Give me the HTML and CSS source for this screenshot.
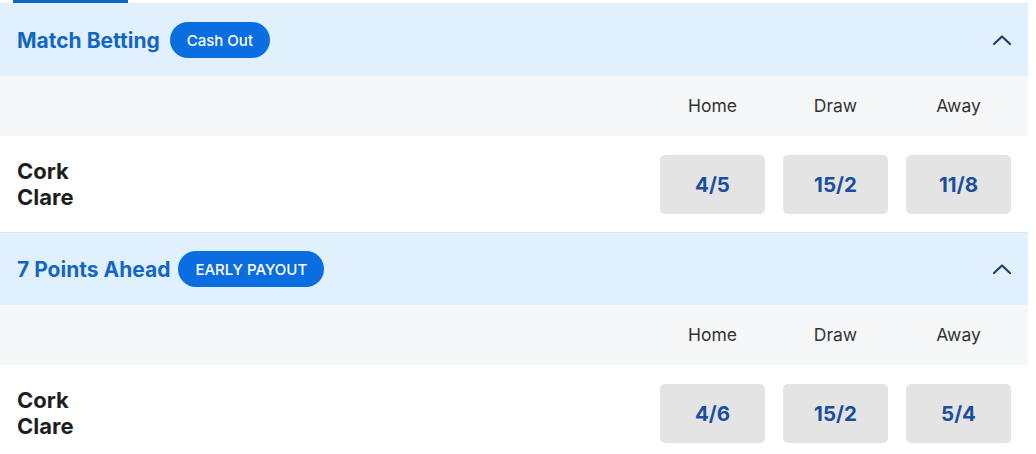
FILE: index.html
```html
<!DOCTYPE html>
<html>
<head>
<meta charset="utf-8">
<link rel="stylesheet" href="styles.css">
</head>
<body>
<div class="page">
  <div class="tabbar"><div class="tab-indicator"></div></div>
  <section class="market">
    <header class="market-head">
      <h2 class="market-title">Match Betting</h2>
      <span class="badge">Cash Out</span>
      <svg class="chevron" width="20" height="12" viewBox="0 0 20 12"><path d="M2 10 L10 2.5 L18 10" fill="none" stroke="#1f3f66" stroke-width="2.2" stroke-linecap="round" stroke-linejoin="round"/></svg>
    </header>
    <div class="labels">
      <span class="label">Home</span><span class="label">Draw</span><span class="label">Away</span>
    </div>
    <div class="event">
      <div class="teams"><div>Cork</div><div>Clare</div></div>
      <div class="odds">
        <button class="price">4/5</button><button class="price">15/2</button><button class="price">11/8</button>
      </div>
    </div>
  </section>
  <section class="market">
    <header class="market-head">
      <h2 class="market-title">7 Points Ahead</h2>
      <span class="badge badge-wide">EARLY PAYOUT</span>
      <svg class="chevron" width="20" height="12" viewBox="0 0 20 12"><path d="M2 10 L10 2.5 L18 10" fill="none" stroke="#1f3f66" stroke-width="2.2" stroke-linecap="round" stroke-linejoin="round"/></svg>
    </header>
    <div class="labels">
      <span class="label">Home</span><span class="label">Draw</span><span class="label">Away</span>
    </div>
    <div class="event">
      <div class="teams"><div>Cork</div><div>Clare</div></div>
      <div class="odds">
        <button class="price">4/6</button><button class="price">15/2</button><button class="price">5/4</button>
      </div>
    </div>
  </section>
</div>
</body>
</html>
```
FILE: styles.css
```css
* { box-sizing: border-box; }
html, body { margin: 0; padding: 0; background: #ffffff; }
body { font-family: Inter, "Noto Sans", "Liberation Sans", sans-serif; }
.page { width: 1028px; }
.tabbar { height: 4px; border-bottom: 1px solid #ececec; background: #fff; }
.tab-indicator { margin-left: 13px; width: 115px; height: 3px; background: #0b62c9; }
.market { border-bottom: 1px solid #dfe6ee; }
.market-head {
  height: 72px; background: #e0f0fc; display: flex; align-items: center;
  padding: 0 16px 0 17px;
}
.market-title { margin: 0; font-size: 21px; font-weight: 700; color: #1466c4; }
.badge {
  margin-left: 10px; height: 36px; padding: 0 17px; border-radius: 18px;
  background: #0a6de0; color: #fff; font-size: 15px; font-weight: 500;
  display: flex; align-items: center;
}
.badge-wide { margin-left: 8px; padding: 0 17px; }
.chevron { margin-left: auto; margin-right: 0; }
.labels {
  height: 60px; background: #f6f7f9; display: flex; justify-content: flex-end;
  align-items: center; gap: 18px; padding-right: 17px; padding-bottom: 2px;
}
.label { width: 105px; text-align: center; font-size: 17.5px; color: #333; }
.event {
  height: 96px; background: #fff; display: flex; align-items: center;
  justify-content: space-between; padding: 0 17px;
}
.teams { font-size: 22px; font-weight: 700; color: #1e1e1e; line-height: 26px; padding-bottom: 1px; }
.odds { display: flex; gap: 18px; }
.price {
  width: 105px; height: 59px; border: none; border-radius: 5px; background: #e4e4e4;
  font-family: inherit; font-size: 20.5px; font-weight: 700; color: #1b4f9d; padding: 0;
}
```
